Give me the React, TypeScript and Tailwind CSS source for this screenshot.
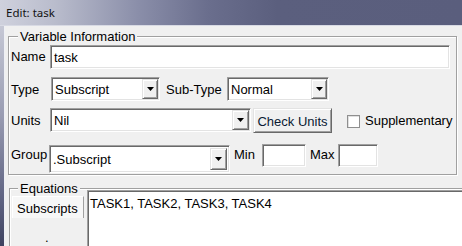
import React from "react";

const sunken =
  "bg-white border border-t-[#a0a0a0] border-l-[#a0a0a0] border-b-white border-r-white shadow-[inset_1px_1px_0_#696969,inset_-1px_-1px_0_#e3e3e3]";
const raised =
  "bg-[#f0f0f0] border border-t-[#e3e3e3] border-l-[#e3e3e3] border-b-[#696969] border-r-[#696969] shadow-[inset_1px_1px_0_#ffffff,inset_-1px_-1px_0_#a0a0a0]";

function Arrow() {
  return (
    <svg width="7" height="4" viewBox="0 0 7 4">
      <path d="M0 0h7L3.5 4z" fill="#000" />
    </svg>
  );
}

function Combo({ w, h, text, btn }: { w: string; h: string; text: string; btn: string }) {
  return (
    <div className={`${sunken} ${w} ${h} flex items-stretch p-[1px] shrink-0`}>
      <div className="flex-1 flex items-center pl-[2px] pt-[1px] text-black">{text}</div>
      <div className={`${raised} ${btn} flex items-center justify-center`}>
        <Arrow />
      </div>
    </div>
  );
}

export default function App() {
  return (
    <div
      className="w-[462px] h-[246px] overflow-hidden flex flex-col text-[13px] leading-[15px] text-black"
      style={{ fontFamily: '"Liberation Sans", Arial, sans-serif' }}
    >
      {/* title bar */}
      <div className="h-[26px] shrink-0 bg-[linear-gradient(90deg,#cfd1dd_0%,#b9bccc_12%,#8a8ea9_30%,#6a6e8d_45%,#5b5f7e_60%,#5a5e7d_100%)] flex items-center pl-[6px] border-b border-[#d8dae4]">
        <span
          className="text-[11.5px] leading-[14px] text-[#111] pt-[1px]"
          style={{ fontFamily: '"Noto Sans", sans-serif' }}
        >
          Edit: task
        </span>
      </div>

      <div className="flex flex-1 min-h-0">
        {/* left frame */}
        <div className="w-[4px] shrink-0 bg-[linear-gradient(180deg,#c6c8d5_0%,#9a9db3_40%,#5d6180_80%,#3e4260_100%)] border-r border-[#eef0f5] box-content" />

        {/* client area */}
        <div className="flex-1 bg-[#f0f0f0] flex flex-col min-w-0">
          {/* Variable Information */}
          <fieldset className="ml-[3px] mr-[7px] mt-[3px] border border-[#a0a0a0] shadow-[inset_1px_1px_0_#ffffff,1px_1px_0_#ffffff] pl-[2px] pr-[4px] pb-[1px]">
            <legend className="ml-[7px] px-[2px] bg-[#f0f0f0] leading-[15px]">Variable Information</legend>

            {/* Name */}
            <div className="flex items-start mt-[1px] h-[24px]">
              <div className="w-[39px] pt-[4px]">Name</div>
              <div className={`${sunken} w-[400px] h-[24px] flex items-center pl-[3px] pt-[1px]`}>task</div>
            </div>

            {/* Type */}
            <div className="flex items-start mt-[8px] h-[24px]">
              <div className="w-[40px] pt-[5px]">Type</div>
              <Combo w="w-[109px]" h="h-[24px]" text="Subscript" btn="w-[16px]" />
              <div className="ml-[6px] w-[61px] pt-[5px]">Sub-Type</div>
              <Combo w="w-[102px]" h="h-[24px]" text="Normal" btn="w-[16px]" />
            </div>

            {/* Units */}
            <div className="flex items-start mt-[7px] h-[25px]">
              <div className="w-[39px] pt-[5px]">Units</div>
              <Combo w="w-[201px]" h="h-[24px]" text="Nil" btn="w-[17px]" />
              <button className={`${raised} ml-[2px] w-[79px] h-[25px] flex items-center justify-center pt-[1px] text-[#0a1a33]`}>
                Check Units
              </button>
              <div className="ml-[15px] mt-[7px] w-[13px] h-[13px] bg-white border border-[#8f8f8f] shadow-[inset_1px_1px_0_#e0e0e0]" />
              <div className="ml-[5px] pt-[5px]">Supplementary</div>
            </div>

            {/* Group */}
            <div className="flex items-start mt-[12px] h-[28px]">
              <div className="w-[38px] pt-[2px]">Group</div>
              <div className={`${sunken} w-[181px] h-[28px] flex items-stretch p-[1px] shrink-0`}>
                <div className="flex-1 flex items-center pl-[2px] pt-[1px]">.Subscript</div>
                <div className={`${raised} w-[17px] my-[1px] mr-[1px] flex items-center justify-center`}>
                  <Arrow />
                </div>
              </div>
              <div className="ml-[4px] w-[28px] pt-[2px]">Min</div>
              <div className={`${sunken} w-[44px] h-[23px] -mt-[1px]`} />
              <div className="ml-[4px] w-[28px] pt-[2px]">Max</div>
              <div className={`${sunken} w-[40px] h-[23px] -mt-[1px]`} />
            </div>
          </fieldset>

          {/* Equations */}
          <fieldset className="ml-[4px] mt-[6px] w-[480px] shrink-0 border border-[#a0a0a0] shadow-[inset_1px_1px_0_#ffffff] pl-[2px] h-[80px]">
            <legend className="ml-[6px] px-[2px] bg-[#f0f0f0] leading-[15px]">Equations</legend>
            <div className="flex -mt-[6px] h-[70px]">
              <div className="flex flex-col w-[75px] pt-[6px]">
                <div className="h-[22px] w-[72px] bg-[#f7f7f7] border-l border-t border-r border-l-white border-t-white border-r-[#a0a0a0] flex items-center pl-[4px] pt-[1px]">
                  Subscripts
                </div>
                <div className="pl-[33px] pt-[12px] leading-[15px]">.</div>
              </div>
              <div className={`${sunken} flex-1 pl-[2px] pt-[5px] text-black`}>TASK1, TASK2, TASK3, TASK4</div>
            </div>
          </fieldset>
        </div>
      </div>
    </div>
  );
}
